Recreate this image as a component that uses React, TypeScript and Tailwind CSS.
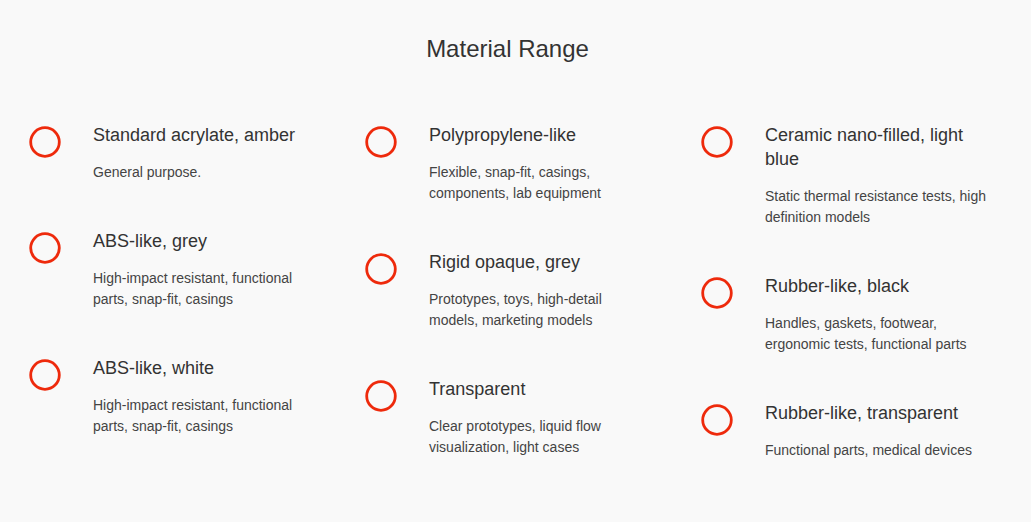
import React from "react";

type Item = { title: string; desc: string };

const columns: Item[][] = [
  [
    { title: "Standard acrylate, amber", desc: "General purpose." },
    { title: "ABS-like, grey", desc: "High-impact resistant, functional parts, snap-fit, casings" },
    { title: "ABS-like, white", desc: "High-impact resistant, functional parts, snap-fit, casings" },
  ],
  [
    { title: "Polypropylene-like", desc: "Flexible, snap-fit, casings, components, lab equipment" },
    { title: "Rigid opaque, grey", desc: "Prototypes, toys, high-detail models, marketing models" },
    { title: "Transparent", desc: "Clear prototypes, liquid flow visualization, light cases" },
  ],
  [
    { title: "Ceramic nano-filled, light blue", desc: "Static thermal resistance tests, high definition models" },
    { title: "Rubber-like, black", desc: "Handles, gaskets, footwear, ergonomic tests, functional parts" },
    { title: "Rubber-like, transparent", desc: "Functional parts, medical devices" },
  ],
];

function Ring() {
  return (
    <svg width="34" height="34" viewBox="0 0 34 34" className="shrink-0 mt-[2px] -ml-[1px]">
      <circle cx="17" cy="17" r="14.3" fill="none" stroke="#ee2a0c" strokeWidth="2.8" />
    </svg>
  );
}

export default function App() {
  return (
    <div
      className="w-[1031px] h-[522px] bg-[#f9f9f9] text-[#333] overflow-hidden"
      style={{ fontFamily: '"Liberation Sans", Arial, sans-serif' }}
    >
      <h1 className="text-center text-[24px] leading-[28px] pt-[35px] pr-[16px] font-normal text-[#333]">
        Material Range
      </h1>
      <div className="grid grid-cols-[336px_336px_336px] pl-[29px] pt-[60px]">
        {columns.map((col, ci) => (
          <div key={ci} className="flex flex-col">
            {col.map((it, ii) => (
              <div key={ii} className="flex gap-[31px] mb-[46px]">
                <Ring />
                <div className="w-[223px]">
                  <div className="text-[18px] leading-[24px] text-[#333]">{it.title}</div>
                  <div className="text-[14px] leading-[21px] text-[#444] mt-[15px]">{it.desc}</div>
                </div>
              </div>
            ))}
          </div>
        ))}
      </div>
    </div>
  );
}
